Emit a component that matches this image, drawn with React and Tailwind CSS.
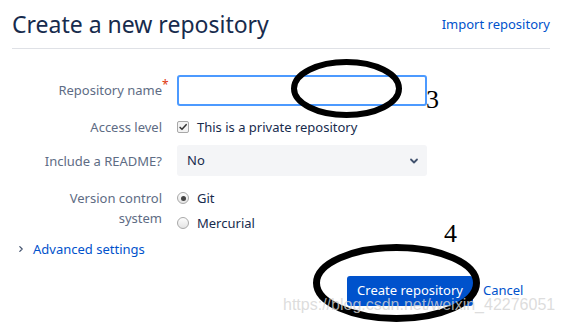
import React from 'react'

// Check mark used inside the fake checkbox
function CheckMark({ className }) {
  return (
    <svg className={className} viewBox="0 0 12 12" fill="none" aria-hidden="true">
      <path d="M2.5 6.5l2.3 2.3L9.8 3.2" stroke="#333" strokeWidth="1.8" strokeLinecap="round" strokeLinejoin="round" />
    </svg>
  )
}

function ChevronDown({ className }) {
  return (
    <svg className={className} viewBox="0 0 10 10" fill="none" aria-hidden="true">
      <path d="M2 3.5l3 3 3-3" stroke="#42526e" strokeWidth="1.8" strokeLinecap="round" strokeLinejoin="round" />
    </svg>
  )
}

function ChevronRight({ className }) {
  return (
    <svg className={className} viewBox="0 0 10 10" fill="none" aria-hidden="true">
      <path d="M3.5 2l3 3-3 3" stroke="#42526e" strokeWidth="1.5" strokeLinecap="round" strokeLinejoin="round" />
    </svg>
  )
}

function Radio({ checked }) {
  return (
    <span className="w-[12px] h-[12px] rounded-full border border-[#a8a8a8] bg-gradient-to-b from-[#fdfdfd] to-[#e4e4e4] flex items-center justify-center shrink-0">
      {checked && <span className="w-[5px] h-[5px] rounded-full bg-[#444]" />}
    </span>
  )
}

function Label({ children, className = '' }) {
  return (
    <div className={`w-[150px] shrink-0 text-right text-[13px] text-[#5e6c84] leading-[20px] ${className}`}>
      {children}
    </div>
  )
}

export default function App() {
  return (
    <div className="relative w-[562px] h-[325px] bg-white overflow-hidden" style={{ fontFamily: '"Noto Sans", "Open Sans", sans-serif' }}>
      <div className="px-[12px]">
        {/* Header */}
        <header className="flex items-end justify-between pt-[8px] pb-[8px] border-b border-[#dfe1e6]">
          <h1 className="text-[23px] leading-[32px] text-[#172b4d] font-normal">Create a new repository</h1>
          <a className="text-[13px] leading-[20px] text-[#0052cc] mb-[6px]">Import repository</a>
        </header>

        {/* Form */}
        <div className="mt-[26px] flex items-center gap-[15px]">
          <Label>
            Repository name<span className="inline-block w-0 text-left text-[#de350b] relative top-[-6px] text-[12px]">*</span>
          </Label>
          <div className="w-[250px] h-[31px] rounded-[3px] border-2 border-[#4c9aff] bg-white" />
        </div>

        <div className="mt-[11px] flex items-center gap-[15px]">
          <Label>Access level</Label>
          <label className="flex items-center gap-[8px] text-[13px] leading-[20px] text-[#172b4d]">
            <span className="w-[12px] h-[12px] rounded-[2px] border border-[#a8a8a8] bg-[#f3f3f3] flex items-center justify-center">
              <CheckMark className="w-[10px] h-[10px]" />
            </span>
            This is a private repository
          </label>
        </div>

        <div className="mt-[8px] flex items-center gap-[15px]">
          <Label>Include a README?</Label>
          <div className="w-[250px] h-[31px] rounded-[3px] bg-[#f4f5f7] flex items-center justify-between pl-[10px] pr-[8px] text-[13px] text-[#172b4d]">
            <span>No</span>
            <ChevronDown className="w-[10px] h-[10px]" />
          </div>
        </div>

        <div className="mt-[12px] flex items-start gap-[15px]">
          <Label>
            Version control
            <br />
            system
          </Label>
          <div className="flex flex-col gap-[5px] text-[13px] leading-[20px] text-[#172b4d]">
            <div className="flex items-center gap-[8px]">
              <Radio checked />
              Git
            </div>
            <div className="flex items-center gap-[8px]">
              <Radio />
              Mercurial
            </div>
          </div>
        </div>

        <div className="mt-[6px] flex items-center gap-[8px] pl-[5px] text-[13px] leading-[20px] text-[#0052cc]">
          <ChevronRight className="w-[8px] h-[10px]" />
          <span>Advanced settings</span>
        </div>

        <div className="mt-[17px] flex items-center gap-[10px] pl-[335px]">
          <button className="w-[126px] h-[30px] rounded-[3px] bg-[#0052cc] text-white text-[13px]">Create repository</button>
          <a className="text-[13px] text-[#0052cc]">Cancel</a>
        </div>
      </div>

      {/* Hand-drawn annotations over the screenshot */}
      <svg className="absolute inset-0 pointer-events-none" width="562" height="325" aria-hidden="true">
        <ellipse cx="346.5" cy="88.5" rx="52.5" ry="26.5" fill="none" stroke="#000" strokeWidth="6" />
        <ellipse cx="396.5" cy="283" rx="80" ry="35.5" fill="none" stroke="#000" strokeWidth="7" />
      </svg>
      <span className="absolute left-[426px] top-[85px] text-[26px] leading-[30px] text-black" style={{ fontFamily: '"Liberation Serif", serif' }}>3</span>
      <span className="absolute left-[444px] top-[219px] text-[26px] leading-[30px] text-black" style={{ fontFamily: '"Liberation Serif", serif' }}>4</span>

      {/* Watermark */}
      <span className="absolute left-[283px] top-[295px] text-[16px] leading-[20px] text-[#d4d4d4]/80 pointer-events-none" style={{ fontFamily: '"Liberation Sans", Arial, sans-serif' }}>
        https://blog.csdn.net/weixin_42276051
      </span>
    </div>
  )
}
